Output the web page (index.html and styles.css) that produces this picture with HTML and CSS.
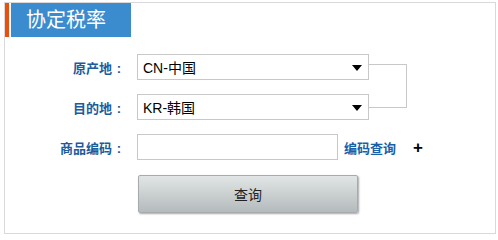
FILE: index.html
```html
<!DOCTYPE html>
<html>
<head>
<meta charset="utf-8">
<link rel="stylesheet" href="styles.css">
</head>
<body>
<div class="panel">
  <div class="header">
    <span class="accent"></span>
    <h1 class="title">协定税率</h1>
  </div>
  <div class="form">
    <div class="pair">
      <div class="rows">
        <div class="row">
          <label class="label">原产地<span class="colon">:</span></label>
          <div class="select"><span>CN-中国</span><i class="arrow"></i></div>
        </div>
        <div class="row">
          <label class="label">目的地<span class="colon">:</span></label>
          <div class="select"><span>KR-韩国</span><i class="arrow"></i></div>
        </div>
      </div>
      <div class="bracket"></div>
    </div>
    <div class="row">
      <label class="label">商品编码<span class="colon">:</span></label>
      <div class="input"></div>
      <a class="link">编码查询</a>
      <span class="plus">+</span>
    </div>
    <div class="actions">
      <button class="btn">查询</button>
    </div>
  </div>
</div>
</body>
</html>
```
FILE: styles.css
```css
html, body {
  margin: 0;
  padding: 0;
  background: #fff;
}
body {
  font-family: "Liberation Sans", "Noto Sans CJK SC", sans-serif;
}
.panel {
  margin: 2px 0 0 4px;
  width: 492px;
  height: 232px;
  box-sizing: border-box;
  border: 1px solid #d9d9d9;
}
.header {
  display: flex;
  height: 34px;
}
.accent {
  width: 4px;
  background: #ee4e0c;
  margin-right: 2px;
}
.title {
  margin: 0;
  width: 120px;
  box-sizing: border-box;
  padding-left: 15px;
  background: #3a8ccf;
  color: #fff;
  font-size: 20px;
  font-weight: normal;
  line-height: 34px;
}
.form {
  margin-top: 17px;
}
.pair {
  display: flex;
  align-items: flex-start;
}
.rows {
  display: flex;
  flex-direction: column;
  gap: 14px;
}
.row {
  display: flex;
  align-items: center;
  height: 26px;
}
.pair + .row {
  margin-top: 14px;
}
.label {
  width: 121px;
  margin-right: 11px;
  text-align: right;
  font-size: 13px;
  font-weight: bold;
  color: #1a5c9c;
}
.colon {
  display: inline-block;
  width: 14px;
  text-align: center;
}
.select {
  width: 232px;
  height: 26px;
  box-sizing: border-box;
  border: 1px solid #c8c8c8;
  display: flex;
  align-items: center;
  justify-content: space-between;
  padding: 0 6px 0 5px;
  font-size: 14px;
  color: #000;
}
.arrow {
  width: 0;
  height: 0;
  border-left: 5.5px solid transparent;
  border-right: 5.5px solid transparent;
  border-top: 6px solid #000;
  margin-top: 1px;
}
.bracket {
  margin-top: 10px;
  width: 38px;
  height: 44px;
  box-sizing: border-box;
  border: 1px solid #c8c8c8;
  border-left: none;
}
.input {
  width: 201px;
  height: 26px;
  box-sizing: border-box;
  border: 1px solid #c8c8c8;
}
.link {
  margin-left: 6px;
  font-size: 13px;
  font-weight: bold;
  color: #1661a8;
}
.plus {
  margin-left: 17px;
  font-size: 17px;
  font-weight: bold;
  color: #000;
  line-height: 1;
}
.actions {
  margin-top: 15px;
  padding-left: 133px;
}
.btn {
  width: 220px;
  height: 38px;
  border: 1px solid #a8abab;
  border-radius: 2px;
  background: linear-gradient(#e1e5e5, #b4bbbc);
  box-shadow: 1px 1px 2px rgba(0,0,0,0.35);
  font-family: "Liberation Sans", "Noto Sans CJK SC", sans-serif;
  font-size: 14px;
  color: #222;
  padding: 0;
}
```
